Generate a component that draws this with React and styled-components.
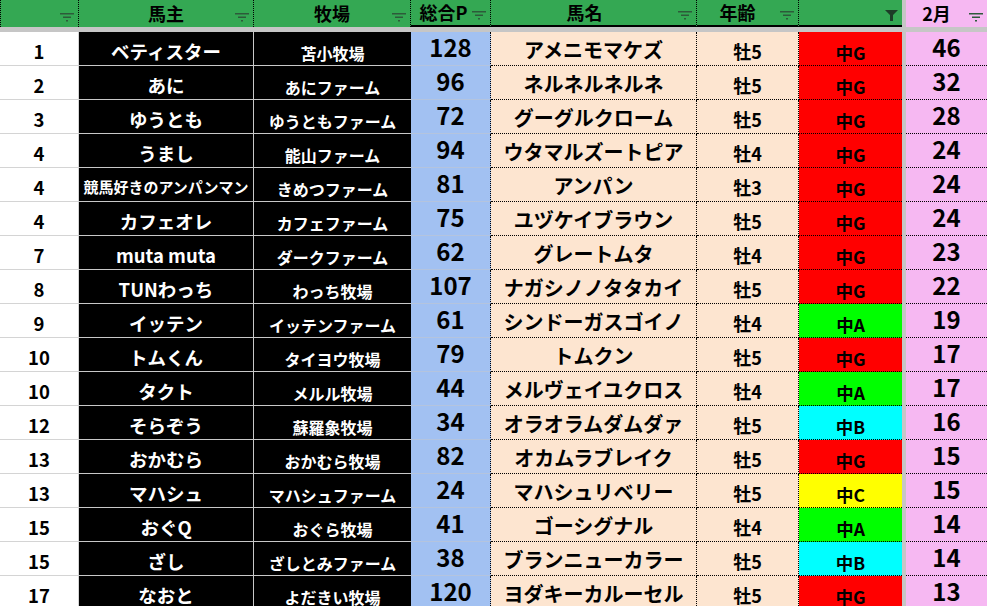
import React from 'react';
import styled, { createGlobalStyle } from 'styled-components';

const COLS = '79px 175px 157px 80px 206px 102px 103px 4px 81px';

const GlobalStyle = createGlobalStyle`
  html, body {
    margin: 0;
    padding: 0;
    background: #fff;
  }
`;

const Sheet = styled.div`
  width: 987px;
  height: 606px;
  overflow: hidden;
  background: #fff;
  color: #000;
  font-family: "Noto Sans CJK JP", "Noto Sans", sans-serif;
  font-weight: 700;
`;

const HeaderRow = styled.div`
  display: grid;
  grid-template-columns: ${COLS};
  height: 27px;
`;

const HeadCell = styled.div`
  position: relative;
  box-sizing: border-box;
  display: flex;
  align-items: center;
  justify-content: center;
  padding-right: ${(p) => p.$pad || 0}px;
  background: ${(p) => (p.$pink ? '#f6b8f2' : '#34a853')};
  border-right: ${(p) => (p.$noline ? 'none' : '1px dotted #000')};
  border-left: ${(p) => (p.$first ? '1px dotted #000' : 'none')};
  border-bottom: ${(p) => (p.$thick ? '2px solid #000' : 'none')};
  font-size: 18px;
  line-height: 1.2;
  white-space: nowrap;
`;

const FilterBtn = styled.span`
  position: absolute;
  right: 4px;
  bottom: ${(p) => (p.$active ? 4 : 5)}px;
  display: flex;
  color: ${(p) => (p.$active ? '#1d3d27' : '#2d5a3a')};
`;

const FreezeBar = styled.div`
  height: 5px;
  background: #c6c6c6;
`;

const Row = styled.div`
  display: grid;
  grid-template-columns: ${COLS};
  height: 34px;
`;

const Cell = styled.div`
  box-sizing: border-box;
  display: flex;
  align-items: flex-end;
  justify-content: center;
  line-height: 1.2;
  white-space: nowrap;
`;

const RankCell = styled(Cell)`
  background: #fff;
  border-right: 1px solid #d4d4d4;
  border-bottom: 1px solid #d4d4d4;
  font-size: 18.5px;
  padding-bottom: 3px;
`;

const OwnerCell = styled(Cell)`
  background: #000;
  color: #fff;
  border-right: 1px solid #c8c8c8;
  border-bottom: 1px solid #c8c8c8;
  font-size: ${(p) => (p.$small ? 15 : 18.5)}px;
  padding-bottom: ${(p) => (p.$small ? 5 : 3)}px;
`;

const FarmCell = styled(Cell)`
  background: #000;
  color: #fff;
  border-bottom: 1px solid #c8c8c8;
  font-size: 16px;
  padding-bottom: 2px;
`;

const PointCell = styled(Cell)`
  background: #a2c1f2;
  border-right: 1px dotted #000;
  border-bottom: 1px solid #b4c4de;
  font-size: 24px;
  padding-bottom: 3px;
`;

const HorseCell = styled(Cell)`
  background: #fde5d0;
  border-right: 1px dotted #000;
  border-bottom: 1px dotted #000;
  font-size: 20px;
  padding-bottom: 3px;
`;

const AgeCell = styled(HorseCell)`
  font-size: 18px;
  padding-bottom: 2px;
`;

const GRADE_BG = {
  G: '#ff0000',
  A: '#00ff00',
  B: '#00ffff',
  C: '#ffff00',
};

const GradeCell = styled(Cell)`
  background: ${(p) => GRADE_BG[p.$grade]};
  border-bottom: 1px dotted #000;
  font-size: 17.5px;
  padding-bottom: 2px;
`;

const Divider = styled.div`
  background: #c6c6c6;
`;

const MonthCell = styled(Cell)`
  background: #f6b8f2;
  border-bottom: 1px dotted #000;
  font-size: 24px;
  padding-bottom: 3px;
`;

const rows = [
  ['1', 'ベティスター', '苫小牧場', 128, 'アメニモマケズ', '牡5', 'G', 46],
  ['2', 'あに', 'あにファーム', 96, 'ネルネルネルネ', '牡5', 'G', 32],
  ['3', 'ゆうとも', 'ゆうともファーム', 72, 'グーグルクローム', '牡5', 'G', 28],
  ['4', 'うまし', '能山ファーム', 94, 'ウタマルズートピア', '牡4', 'G', 24],
  ['4', '競馬好きのアンパンマン', 'きめつファーム', 81, 'アンパン', '牡3', 'G', 24, true],
  ['4', 'カフェオレ', 'カフェファーム', 75, 'ユヅケイブラウン', '牡5', 'G', 24],
  ['7', 'muta muta', 'ダークファーム', 62, 'グレートムタ', '牡4', 'G', 23],
  ['8', 'TUNわっち', 'わっち牧場', 107, 'ナガシノノタタカイ', '牡5', 'G', 22],
  ['9', 'イッテン', 'イッテンファーム', 61, 'シンドーガスゴイノ', '牡4', 'A', 19],
  ['10', 'トムくん', 'タイヨウ牧場', 79, 'トムクン', '牡5', 'G', 17],
  ['10', 'タクト', 'メルル牧場', 44, 'メルヴェイユクロス', '牡4', 'A', 17],
  ['12', 'そらぞう', '蘇羅象牧場', 34, 'オラオラムダムダァ', '牡5', 'B', 16],
  ['13', 'おかむら', 'おかむら牧場', 82, 'オカムラブレイク', '牡5', 'G', 15],
  ['13', 'マハシュ', 'マハシュファーム', 24, 'マハシュリベリー', '牡5', 'C', 15],
  ['15', 'おぐQ', 'おぐら牧場', 41, 'ゴーシグナル', '牡4', 'A', 14],
  ['15', 'ざし', 'ざしとみファーム', 38, 'ブランニューカラー', '牡5', 'B', 14],
  ['17', 'なおと', 'よだきい牧場', 120, 'ヨダキーカルーセル', '牡5', 'G', 13],
];

function FilterIcon({ active }) {
  return (
    <FilterBtn $active={active}>
      {active ? (
        <svg width="13" height="11" viewBox="0 0 13 11" fill="currentColor">
          <path d="M0 0H13L8 5V11H5V5Z" />
        </svg>
      ) : (
        <svg width="14" height="9" viewBox="0 0 14 9" fill="currentColor">
          <rect x="0" y="0" width="14" height="1.5" />
          <rect x="3" y="3.5" width="8" height="1.5" />
          <rect x="6" y="7" width="2" height="1.5" />
        </svg>
      )}
    </FilterBtn>
  );
}

export default function App() {
  return (
    <Sheet>
      <GlobalStyle />
      <HeaderRow>
        <HeadCell $first>
          <FilterIcon />
        </HeadCell>
        <HeadCell>
          馬主
          <FilterIcon />
        </HeadCell>
        <HeadCell>
          牧場
          <FilterIcon />
        </HeadCell>
        <HeadCell $thick $pad={14}>
          総合P
          <FilterIcon />
        </HeadCell>
        <HeadCell $thick $pad={18}>
          馬名
          <FilterIcon />
        </HeadCell>
        <HeadCell $thick $pad={20}>
          年齢
          <FilterIcon />
        </HeadCell>
        <HeadCell $thick $noline>
          <FilterIcon active />
        </HeadCell>
        <Divider />
        <HeadCell $pink $noline $pad={20}>
          2月
          <FilterIcon />
        </HeadCell>
      </HeaderRow>
      <FreezeBar />
      {rows.map(([rank, owner, farm, pts, horse, age, grade, month, small], i) => (
        <Row key={i}>
          <RankCell>{rank}</RankCell>
          <OwnerCell $small={small}>{owner}</OwnerCell>
          <FarmCell>{farm}</FarmCell>
          <PointCell>{pts}</PointCell>
          <HorseCell>{horse}</HorseCell>
          <AgeCell>{age}</AgeCell>
          <GradeCell $grade={grade}>中{grade}</GradeCell>
          <Divider />
          <MonthCell>{month}</MonthCell>
        </Row>
      ))}
    </Sheet>
  );
}
